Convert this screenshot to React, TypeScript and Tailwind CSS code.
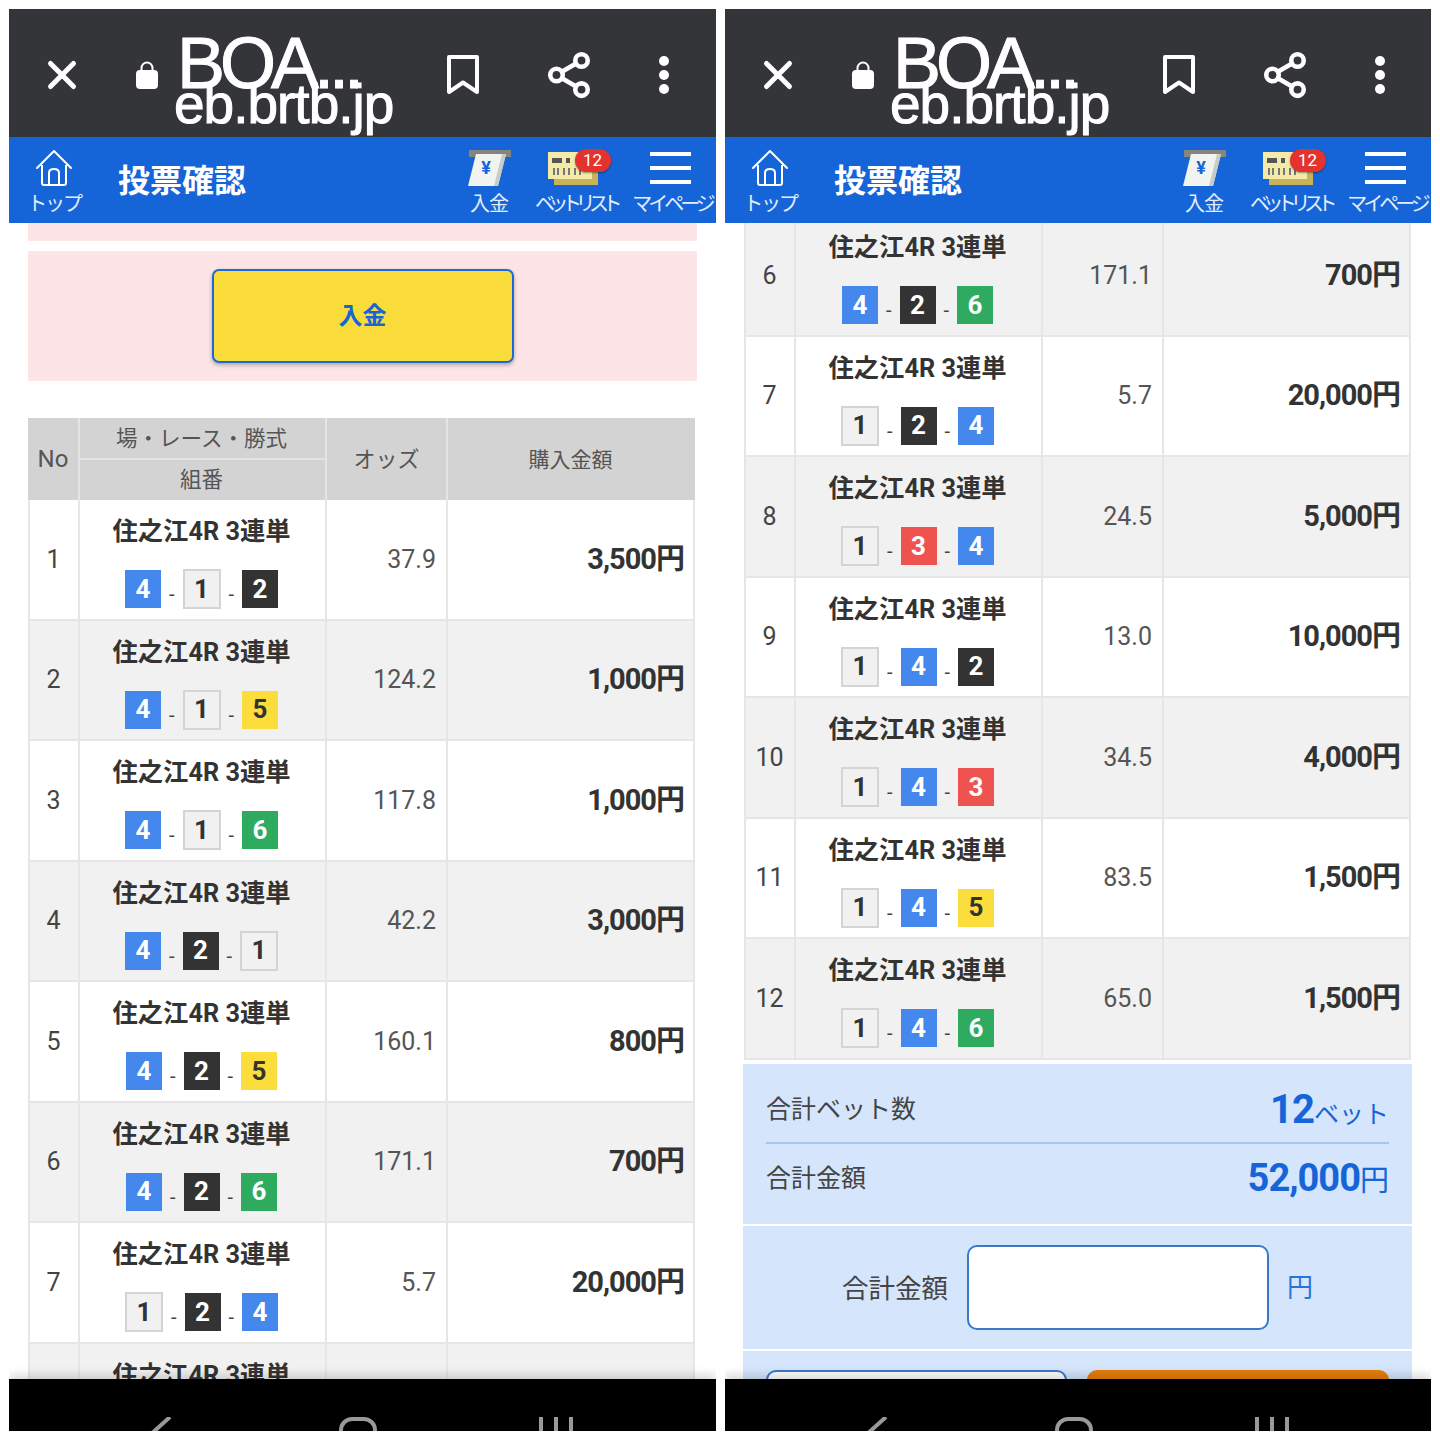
import { X, Share2 } from 'lucide-react'

const font = `font-['Roboto','Noto_Sans_CJK_JP',sans-serif]`

type Chip = 1 | 2 | 3 | 4 | 5 | 6

const chipStyle: Record<Chip, string> = {
  1: 'w-[38px] h-[40px] bg-[#f1f1f1] text-[#333] border-2 border-[#d4d4d4]',
  2: 'w-[36px] h-[38px] bg-[#333] text-white',
  3: 'w-[36px] h-[38px] bg-[#ee5350] text-white',
  4: 'w-[36px] h-[38px] bg-[#4488ee] text-white',
  5: 'w-[36px] h-[38px] bg-[#fbdd3c] text-[#333]',
  6: 'w-[36px] h-[38px] bg-[#2eab5f] text-white',
}

const rows: { no: number; chips: Chip[]; odds: string; amount: string }[] = [
  { no: 1, chips: [4, 1, 2], odds: '37.9', amount: '3,500' },
  { no: 2, chips: [4, 1, 5], odds: '124.2', amount: '1,000' },
  { no: 3, chips: [4, 1, 6], odds: '117.8', amount: '1,000' },
  { no: 4, chips: [4, 2, 1], odds: '42.2', amount: '3,000' },
  { no: 5, chips: [4, 2, 5], odds: '160.1', amount: '800' },
  { no: 6, chips: [4, 2, 6], odds: '171.1', amount: '700' },
  { no: 7, chips: [1, 2, 4], odds: '5.7', amount: '20,000' },
  { no: 8, chips: [1, 3, 4], odds: '24.5', amount: '5,000' },
  { no: 9, chips: [1, 4, 2], odds: '13.0', amount: '10,000' },
  { no: 10, chips: [1, 4, 3], odds: '34.5', amount: '4,000' },
  { no: 11, chips: [1, 4, 5], odds: '83.5', amount: '1,500' },
  { no: 12, chips: [1, 4, 6], odds: '65.0', amount: '1,500' },
]

const BrowserBar = () => (
  <div className="flex items-center h-[128px] shrink-0 pt-[4px] bg-[#333539] text-white">
    <div className="flex justify-center w-[106px]">
      <X size={46} strokeWidth={2.6} />
    </div>
    <div className="flex justify-center w-[64px]">
      <svg width="24" height="30" viewBox="0 0 24 30" fill="none">
        <path d="M6.5 11V8a5.500 5.500 0 0 1 11 0v3" stroke="white" strokeWidth="2" />
        <rect x="1" y="10" width="22" height="19" rx="4" fill="white" />
      </svg>
    </div>
    <div className="w-[232px] h-full font-['Liberation_Sans',sans-serif] whitespace-nowrap [-webkit-text-stroke:1px_white]">
      <div className="pt-[16px] -ml-[2px] text-[72px] leading-[68px] tracking-[-5px]">BOA...</div>
      <div className="-mt-[19px] -ml-[5px] text-[55px] leading-[52px] tracking-[-1px]">eb.brtb.jp</div>
    </div>
    <div className="flex justify-center w-[104px]">
      <svg width="34" height="42" viewBox="0 0 34 42" fill="none" stroke="white" strokeWidth="4">
        <path d="M3 3h28v35L17 28.500 3 38z" strokeLinejoin="round" />
      </svg>
    </div>
    <div className="flex justify-center w-[108px]">
      <Share2 size={50} strokeWidth={2.2} />
    </div>
    <div className="flex flex-col items-center gap-[4px] w-[82px]">
      <span className="size-[10px] rounded-full bg-white" />
      <span className="size-[10px] rounded-full bg-white" />
      <span className="size-[10px] rounded-full bg-white" />
    </div>
  </div>
)

const HeadItem = ({ label, width, tracking, children }: { label: string; width: string; tracking: string; children: React.ReactNode }) => (
  <div className={`flex flex-col items-center pt-[4px] ${width}`}>
    <div className="h-[40px] flex items-center justify-center relative">{children}</div>
    <div className={`mt-[3px] text-[20px] leading-[26px] whitespace-nowrap text-[#e4eefc] ${tracking}`}>{label}</div>
  </div>
)

const AppHeader = () => (
  <div className="flex items-center h-[86px] shrink-0 bg-[#1565d8] text-white">
    <HeadItem label="トップ" width="w-[90px]" tracking="tracking-[-2.2px]">
      <svg width="38" height="40" viewBox="0 0 38 40" fill="none" stroke="white" strokeWidth="2">
        <path d="M2 20 19 3l17 17" strokeLinecap="round" strokeLinejoin="round" />
        <path d="M7 17v18q0 2 2 2h20q2 0 2-2V17" />
        <path d="M14 37V25q0-4 5-4t5 4v12" />
      </svg>
    </HeadItem>
    <div className="ml-[19px] pt-[2px] text-[32px] font-bold leading-none">投票確認</div>
    <div className="ml-auto flex items-center pr-[1px]">
      <HeadItem label="入金" width="w-[86px]" tracking="tracking-[-1px]">
        <svg width="44" height="36" viewBox="0 0 44 36">
          <rect x="2" y="0" width="42" height="7" fill="#85857f" />
          <path d="M9 4h30l-8 32H1z" fill="#f1f3ef" />
          <path d="M39 4l-8 32h-4l8-32z" fill="#c9cbc6" />
          <text x="19" y="24" fontSize="18" fontWeight="700" fill="#1565d8" textAnchor="middle">¥</text>
        </svg>
      </HeadItem>
      <HeadItem label="ベットリスト" width="w-[87px]" tracking="tracking-[-6.500px]">
        <svg className="-ml-[6px]" width="50" height="36" viewBox="0 0 50 36">
          <rect x="6" y="8" width="44" height="27" fill="#c9b25c" />
          <rect x="0" y="2" width="44" height="27" fill="#f4eba8" />
          <rect x="4" y="8" width="10" height="5" fill="#555" />
          <rect x="18" y="8" width="4" height="5" fill="#555" />
          <path d="M6 18v7M10 18v7M16 18v7M21 18v7M27 18v7M32 18v7" stroke="#777" strokeWidth="2" />
        </svg>
        <span className="absolute top-[1px] left-[21px] w-[36px] h-[23px] rounded-full bg-[#e4332f] text-[17px] leading-[23px] text-center shadow-[0_1px_2px_rgba(0,0,0,.4)]">12</span>
      </HeadItem>
      <div className="ml-[10px]">
        <HeadItem label="マイページ" width="w-[86px]" tracking="tracking-[-4px]">
          <div className="flex flex-col gap-[10px] w-[41px] -ml-[4px]">
            <span className="h-[4px] bg-white" />
            <span className="h-[4px] bg-white" />
            <span className="h-[4px] bg-white" />
          </div>
        </HeadItem>
      </div>
    </div>
  </div>
)

const TableHead = () => (
  <div className="grid grid-cols-[50px_247px_121px_1fr] h-[82px] bg-[#d3d3d3] text-[#555] text-center">
    <div className="flex items-center justify-center text-[24px]">No</div>
    <div className="flex flex-col border-l-2 border-[#e4e4e4]">
      <div className="h-[42px] flex items-center justify-center text-[21.500px] pr-[2px] pt-[2px] border-b-2 border-[#e4e4e4]">場・レース・勝式</div>
      <div className="flex-1 flex items-center justify-center text-[21.500px] pr-[2px]">組番</div>
    </div>
    <div className="flex items-center justify-center text-[22px] border-l-2 border-[#e4e4e4]">オッズ</div>
    <div className="flex items-center justify-center pt-[3px] pr-[2px] text-[21px] border-l-2 border-[#e4e4e4]">購入金額</div>
  </div>
)

const Row = ({ no, chips, odds, amount }: (typeof rows)[number]) => (
  <div className={`grid grid-cols-[48px_247px_121px_1fr] h-[120.5px] text-[#333] border-b-2 border-[#e6e6e6] border-x-2 ${no % 2 ? 'bg-white' : 'bg-[#f1f1f1]'}`}>
    <div className="flex items-center justify-center text-[25px] pr-[1px] text-[#444]">{no}</div>
    <div className="flex flex-col items-center pr-[2px] border-l-2 border-[#e6e6e6]">
      <div className="mt-[15px] text-[25.300px] leading-[34px] font-bold whitespace-nowrap">住之江4R 3連単</div>
      <div className="mt-[20px] h-[40px] flex items-center gap-[8px]">
        {chips.map((c, i) => (
          <div key={i} className="flex items-center gap-[8px]">
            {i > 0 && <span className="text-[20px] leading-none mt-[10px] text-[#444]">-</span>}
            <span className={`flex items-center justify-center text-[26px] font-bold ${chipStyle[c]}`}>{c}</span>
          </div>
        ))}
      </div>
    </div>
    <div className="flex items-center justify-end pr-[10px] text-[25px] text-[#555] border-l-2 border-[#e6e6e6]">{odds}</div>
    <div className="flex items-center justify-end pr-[9px] text-[29px] font-bold tracking-[-1px] border-l-2 border-[#e6e6e6]">{amount}円</div>
  </div>
)

const Summary = () => (
  <div className="mt-[4px] -mx-[1px] flex flex-col gap-[2px]">
    <div className="h-[160px] bg-[#d5e5fb] px-[23px] text-[#444]">
      <div className="h-[80px] flex items-end justify-between border-b-2 border-[#a9c4ee] pb-[5px]">
        <span className="text-[25px] leading-[38px] mb-[8px]">合計ベット数</span>
        <span className="text-[#1565d8] text-[25px] leading-[44px]">
          <b className="text-[40px] tracking-[-1px]">12</b>ベット
        </span>
      </div>
      <div className="h-[70px] flex items-center justify-between">
        <span className="text-[25px]">合計金額</span>
        <span className="text-[#1565d8] text-[29px]">
          <b className="text-[38px] tracking-[-1px]">52,000</b>円
        </span>
      </div>
    </div>
    <div className="h-[123px] bg-[#d5e5fb] flex items-center">
      <div className="w-[205px] pt-[3px] text-right text-[26.500px] text-[#444]">合計金額</div>
      <div className="ml-[19px] w-[302px] h-[85px] rounded-[10px] bg-white border-2 border-[#3a78c8]" />
      <div className="ml-[18px] pt-[3px] text-[26px] text-[#2a74d8]">円</div>
    </div>
    <div className="h-[80px] bg-[#d5e5fb] flex gap-[20px] px-[23px] pt-[19px]">
      <div className="w-[301px] h-[60px] rounded-[10px] bg-white border-2 border-[#3a78c8]" />
      <div className="w-[302px] h-[60px] rounded-[10px] bg-[#e57e0c]" />
    </div>
  </div>
)

const BottomNav = () => (
  <div className="h-[52px] shrink-0 bg-black relative z-10 shadow-[0_-5px_8px_rgba(0,0,0,.14)] overflow-hidden">
    <div className="flex items-start pt-[38px] pl-[139px]">
      <svg width="24" height="14" viewBox="0 0 24 14" fill="none" stroke="#999" strokeWidth="4">
        <path d="M22 0 2 18" />
      </svg>
      <svg className="ml-[166px]" width="40" height="14" viewBox="0 0 40 14" fill="none" stroke="#999" strokeWidth="4">
        <path d="M3 14v-1a11 11 0 0 1 11-11h12a11 11 0 0 1 11 11v1" />
      </svg>
      <svg className="ml-[160px]" width="36" height="14" viewBox="0 0 36 14" fill="none" stroke="#999" strokeWidth="4">
        <path d="M3 0v14M18 0v14M33 0v14" />
      </svg>
    </div>
  </div>
)

const Phone = ({ children }: { children: React.ReactNode }) => (
  <div className="w-[707px] last:w-[706px] h-[1422px] flex flex-col overflow-hidden shrink-0">
    <BrowserBar />
    <AppHeader />
    <div className="flex-1 min-h-0 overflow-hidden bg-white">{children}</div>
    <BottomNav />
  </div>
)

const App = () => (
  <div className={`w-[1440px] h-[1440px] bg-white flex gap-[9px] pl-[9px] pt-[9px] overflow-hidden ${font}`}>
    <Phone>
      <div className="mx-[19px]">
        <div className="h-[18px] w-[669px] bg-[#fde4e6]" />
        <div className="mt-[10px] h-[130px] w-[669px] bg-[#fde4e6] flex items-center justify-center">
          <div className="w-[302px] h-[94px] rounded-[7px] bg-[#f9dc3a] border-2 border-[#1a6ad8] shadow-[0_2px_4px_rgba(0,0,0,.3)] flex items-center justify-center text-[24px] font-bold text-[#1565d8]">入金</div>
        </div>
        <div className="mt-[37px] w-[667px]">
          <TableHead />
          {rows.slice(0, 8).map((r) => (
            <Row key={r.no} {...r} />
          ))}
        </div>
      </div>
    </Phone>
    <Phone>
      <div className="mx-[19px] -mt-[7px] w-[667px]">
        {rows.slice(5).map((r) => (
          <Row key={r.no} {...r} />
        ))}
        <Summary />
      </div>
    </Phone>
  </div>
)

export default App
